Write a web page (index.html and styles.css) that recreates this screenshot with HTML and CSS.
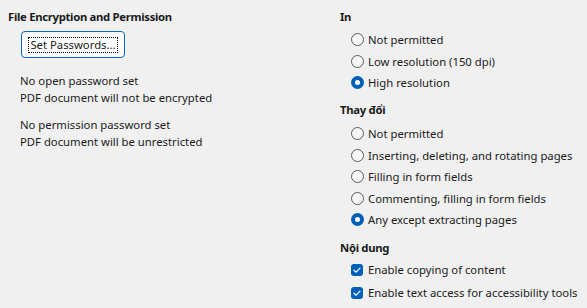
FILE: index.html
```html
<!DOCTYPE html>
<html>
<head>
<meta charset="utf-8">
<link rel="stylesheet" href="styles.css">
</head>
<body>
<div class="page">
  <section class="left">
    <h2 class="heading">File Encryption and Permission</h2>
    <div class="btn-row"><button class="btn"><span class="focus">Set Passwords...</span></button></div>
    <p class="info">No open password set<br>PDF document will not be encrypted</p>
    <p class="info second">No permission password set<br>PDF document will be unrestricted</p>
  </section>
  <section class="right">
    <h2 class="heading">In</h2>
    <ul class="options print">
      <li class="opt"><span class="radio"></span>Not permitted</li>
      <li class="opt"><span class="radio"></span>Low resolution (150 dpi)</li>
      <li class="opt"><span class="radio on"></span>High resolution</li>
    </ul>
    <h2 class="heading h-change">Thay đổi</h2>
    <ul class="options change">
      <li class="opt"><span class="radio"></span>Not permitted</li>
      <li class="opt"><span class="radio"></span>Inserting, deleting, and rotating pages</li>
      <li class="opt"><span class="radio"></span>Filling in form fields</li>
      <li class="opt"><span class="radio"></span>Commenting, filling in form fields</li>
      <li class="opt"><span class="radio on"></span>Any except extracting pages</li>
    </ul>
    <h2 class="heading h-content">Nội dung</h2>
    <ul class="options content">
      <li class="opt chk-row"><span class="check"><svg viewBox="0 0 12 12" width="12" height="12"><path d="M3 6.2 L5.1 8.2 L9 4.2" fill="none" stroke="#fff" stroke-width="1.2" stroke-linecap="round" stroke-linejoin="round"/></svg></span>Enable copying of content</li>
      <li class="opt chk-row"><span class="check"><svg viewBox="0 0 12 12" width="12" height="12"><path d="M3 6.2 L5.1 8.2 L9 4.2" fill="none" stroke="#fff" stroke-width="1.2" stroke-linecap="round" stroke-linejoin="round"/></svg></span>Enable text access for accessibility tools</li>
    </ul>
  </section>
</div>
</body>
</html>
```
FILE: styles.css
```css
html, body {
  margin: 0;
  padding: 0;
  background: #f0f0f0;
}
body {
  font-family: "Noto Sans", "Open Sans", sans-serif;
  font-size: 11.3px;
  color: #1a1a1a;
  width: 587px;
  height: 308px;
  overflow: hidden;
  white-space: nowrap;
}
.page {
  display: grid;
  grid-template-columns: 332px 1fr;
  padding: 8px 0 0 8px;
}
.heading {
  margin: 0;
  font-size: 11.3px;
  font-weight: 700;
  letter-spacing: -0.3px;
  height: 18px;
  line-height: 18px;
}
.btn-row {
  margin-top: 5px;
  padding-left: 13px;
}
.btn {
  width: 104px;
  height: 27px;
  box-sizing: border-box;
  border: 1px solid #0067c0;
  border-radius: 4px;
  background: #fdfdfd;
  font: inherit;
  color: #1a1a1a;
  padding: 0;
  display: flex;
  align-items: center;
  justify-content: center;
}
.focus {
  outline: 1px dotted #000;
  outline-offset: 0;
  line-height: 14px;
  padding: 0 1px;
}
.info {
  margin: 15px 0 0 12px;
  line-height: 16.5px;
}
.info.second {
  margin-top: 11px;
}
.options {
  list-style: none;
  margin: 0;
  padding: 0 0 0 11px;
}
.opt {
  display: flex;
  align-items: center;
  height: 21.4px;
}
.print { margin-top: 3px; }
.h-change { margin-top: 8px; }
.change { margin-top: 4px; }
.h-content { margin-top: 9px; }
.content { margin-top: 1px; }
.chk-row { height: 23px; }
.radio {
  width: 13px;
  height: 13px;
  box-sizing: border-box;
  border: 1px solid #5a5a5a;
  border-radius: 50%;
  background: #f6f6f6;
  margin-right: 4px;
  flex: none;
  display: flex;
  align-items: center;
  justify-content: center;
}
.radio.on {
  border: none;
  background: #005fb8;
}
.radio.on::after {
  content: "";
  width: 5px;
  height: 5px;
  border-radius: 50%;
  background: #fff;
}
.check {
  width: 12px;
  height: 12px;
  border-radius: 3px;
  background: #005fb8;
  margin: 0 5px 0 0;
  flex: none;
  display: flex;
}
```
